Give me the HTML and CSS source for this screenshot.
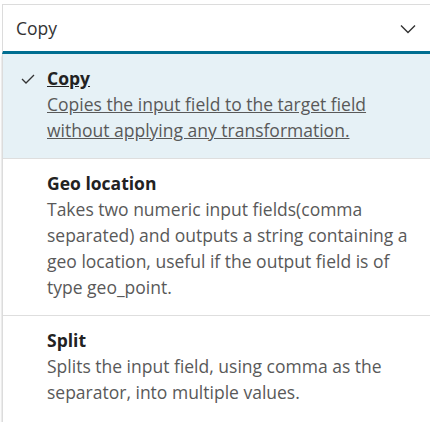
FILE: index.html
```html
<!DOCTYPE html>
<html>
<head>
<meta charset="utf-8">
<link rel="stylesheet" href="styles.css">
</head>
<body>
<div class="wrap">
  <div class="select">
    <span class="value">Copy</span>
    <svg class="chev" width="16" height="10" viewBox="0 0 16 10"><path d="M1 1.5 L8 8.5 L15 1.5" fill="none" stroke="#333" stroke-width="1.4"/></svg>
  </div>
  <ul class="list">
    <li class="item selected">
      <svg class="check" width="14" height="10" viewBox="0 0 14 10"><path d="M1 5 L5 9 L13 1" fill="none" stroke="#333" stroke-width="1.3"/></svg>
      <div class="title">Copy</div>
      <div class="desc">Copies the input field to the target field without applying any transformation.</div>
    </li>
    <li class="item">
      <div class="title">Geo location</div>
      <div class="desc">Takes two numeric input fields(comma separated) and outputs a string containing a geo location, useful if the output field is of type geo_point.</div>
    </li>
    <li class="item">
      <div class="title">Split</div>
      <div class="desc">Splits the input field, using comma as the separator, into multiple values.</div>
    </li>
  </ul>
</div>
</body>
</html>
```

FILE: styles.css
```css
html, body { margin: 0; padding: 0; background: #fff; }
body { font-family: "Open Sans", sans-serif; overflow: hidden; }
.wrap { padding: 4px 0 0 2px; width: 440px; }
.select {
  height: 46px;
  border-top: 1px solid #dcdcdc;
  border-left: 1px solid #dcdcdc;
  border-bottom: 3px solid #006e91;
  display: flex;
  align-items: center;
  padding-left: 13px;
  position: relative;
}
.value { font-size: 17.5px; color: #333; }
.chev { position: absolute; left: 397px; top: 19px; }
.list {
  list-style: none;
  margin: 0;
  padding: 0;
  border-left: 1px solid #dcdcdc;
  box-shadow: 0 2px 2px rgba(0,0,0,0.25);
  width: 429px;
}
.item {
  position: relative;
  padding: 11px 14px 15px 44px;
  border-bottom: 1px solid #dedede;
}
.item:last-child { border-bottom: none; padding-bottom: 17px; }
.item.selected { background: #e6f1f6; }
.title { font-size: 17.5px; font-weight: 700; color: #222; line-height: 26px; }
.desc { font-size: 17.5px; color: #595959; line-height: 26px; }
.selected .title, .selected .desc { text-decoration: underline; }
.selected .title { color: #222; }
.check { position: absolute; left: 18px; top: 20px; }
```
